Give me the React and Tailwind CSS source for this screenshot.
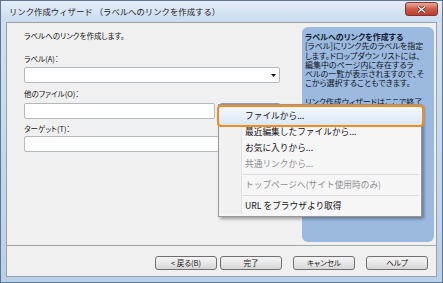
import React from "react";

const menuItems = [
  { label: "ファイルから...", active: true },
  { label: "最近編集したファイルから..." },
  { label: "お気に入りから..." },
  { label: "共通リンクから...", disabled: true },
  { sep: true },
  { label: "トップページへ(サイト使用時のみ)", disabled: true },
  { sep: true },
  { label: "URL をブラウザより取得" },
];

const helpLines = [
  "[ラベル]にリンク先のラベルを指定",
  "します。ドロップダウン リストには、",
  "編集中のページ内に存在するラ",
  "ベルの一覧が表示されますので、そ",
  "こから選択することもできます。",
  "\u00a0",
  "リンク作成ウィザードはここで終了",
];

const Field = ({ className = "", children }) => (
  <div
    className={`h-[16px] bg-white border border-[#b4b8c0] rounded-[2px] relative ${className}`}
  >
    {children}
  </div>
);

const WizardButton = ({ className = "", children }) => (
  <button
    className={`block w-[62px] h-[14px] rounded-[3px] border border-[#707070] bg-linear-to-b from-[#f4f4f4] via-[#e8e8e8] to-[#d6d6d6] text-[7.5px] leading-[12px] text-[#1a1a1a] [font-feature-settings:'palt'] ${className}`}
  >
    {children}
  </button>
);

const LinkMenu = () => (
  <div className="absolute left-[211px] top-[81px] w-[204px] bg-[#f6f6f6] border border-[#979797] pt-[3px] pb-[2px] shadow-[2px_2px_3px_rgba(0,0,0,0.35)] text-[8.7px]">
    {menuItems.map((item, i) =>
      item.sep ? (
        <div key={i} className="flex h-[5px]">
          <div className="w-[23px] bg-[#f1f1f1] border-r border-[#e2e3e3]" />
          <div className="flex-1 flex items-center pl-[1px] pr-[2px]">
            <div className="w-full border-t border-[#dcdcdc]" />
          </div>
        </div>
      ) : item.active ? (
        <div key={i} className="relative h-[16px]">
          {/* highlighted item with orange callout */}
          <div className="absolute -top-[3px] -bottom-[3px] -left-[2px] -right-[3px] rounded-[4px] border-2 border-[#f28c1e] bg-linear-to-b from-[#f3f8fd] to-[#d9e8f6]" />
          <div className="relative pl-[26px] leading-[16px] text-[#111]">
            {item.label}
          </div>
        </div>
      ) : (
        <div key={i} className="flex h-[16px]">
          <div className="w-[23px] bg-[#f1f1f1] border-r border-[#e2e3e3]" />
          <div
            className={`flex-1 pl-[3px] leading-[16px] whitespace-nowrap ${
              item.disabled ? "text-[#8e8e8e]" : "text-[#111]"
            }`}
          >
            {item.label}
          </div>
        </div>
      )
    )}
  </div>
);

const App = () => {
  return (
    <div className="w-[443px] h-[283px] flex flex-col border border-[#5f7793] bg-linear-to-b from-[#d3e2f2] to-[#b9d0ea] px-[5px] pb-[5px] font-['Noto_Sans_CJK_JP','Noto_Sans',sans-serif] overflow-hidden">
      {/* Title bar */}
      <div className="h-[21px] flex items-center justify-between bg-linear-to-b from-[#e4edf7] to-[#c9dbef] -mx-[5px] px-[8px]">
        <span className="text-[8.4px] text-[#1b1b1b] whitespace-nowrap">
          リンク作成ウィザード （ラベルへのリンクを作成する）
        </span>
        <div className="w-[33px] h-[14px] -mt-[5px] -mr-[4px] rounded-[3px] border border-[#7a3a32] bg-linear-to-b from-[#e8a89c] via-[#cf5a47] to-[#c0392b] flex items-center justify-center">
          <svg width="9" height="7" viewBox="0 0 9 7">
            <path d="M1 0.5 L8 6.5 M8 0.5 L1 6.5" stroke="#4a1a14" strokeWidth="2.6" />
            <path d="M1 0.5 L8 6.5 M8 0.5 L1 6.5" stroke="#ffffff" strokeWidth="1.4" />
          </svg>
        </div>
      </div>

      {/* Client area */}
      <div className="flex-1 relative flex flex-col border border-[#98a0aa] bg-[#f0f0f0] text-[#111]">
        <div className="h-[222px] flex">
          {/* Left form */}
          <div className="flex-1 pl-[17px] pt-[8px] text-[7.5px] leading-[10px] [font-feature-settings:'palt']">
            <div>ラベルへのリンクを作成します。</div>
            <div className="mt-[13px]">ラベル(A)：</div>
            <Field className="mt-[3px] w-[256px]">
              <svg
                className="absolute right-[3px] top-[6px]"
                width="5"
                height="3"
                viewBox="0 0 5 3"
              >
                <path d="M0 0 H5 L2.5 3 Z" fill="#111" />
              </svg>
            </Field>
            <div className="mt-[6px]">他のファイル(O)：</div>
            <div className="mt-[4px] flex gap-[4px]">
              <Field className="w-[191px]" />
              <div className="w-[62px] h-[16px] rounded-[3px] border border-[#8aa0c0] bg-linear-to-b from-[#eef4fb] to-[#d7e4f3]" />
            </div>
            <div className="mt-[5px]">ターゲット(T)：</div>
            <Field className="mt-[2px] w-[256px]" />
          </div>

          {/* Help panel */}
          <div className="w-[132px] mt-[4px] mb-[3px] mr-[2px] rounded-[6px] bg-[#9cbae0] pl-[3px] pt-[5px] text-[8px] leading-[9.3px] text-[#0e1420] whitespace-nowrap overflow-hidden [font-feature-settings:'palt']">
            <div className="font-bold text-[#101a30]">ラベルへのリンクを作成する</div>
            {helpLines.map((line, i) => (
              <div key={i}>{line}</div>
            ))}
          </div>
        </div>

        <div className="border-t border-[#a7a7a7]" />

        {/* Footer buttons */}
        <div className="h-[30px] flex items-start justify-end pt-[10px] pr-[8px]">
          <WizardButton>&lt; 戻る(B)</WizardButton>
          <WizardButton className="ml-[3px]">完了</WizardButton>
          <WizardButton className="ml-[11px]">キャンセル</WizardButton>
          <WizardButton className="ml-[11px]">ヘルプ</WizardButton>
        </div>

        <LinkMenu />
      </div>
    </div>
  );
};

export default App;
